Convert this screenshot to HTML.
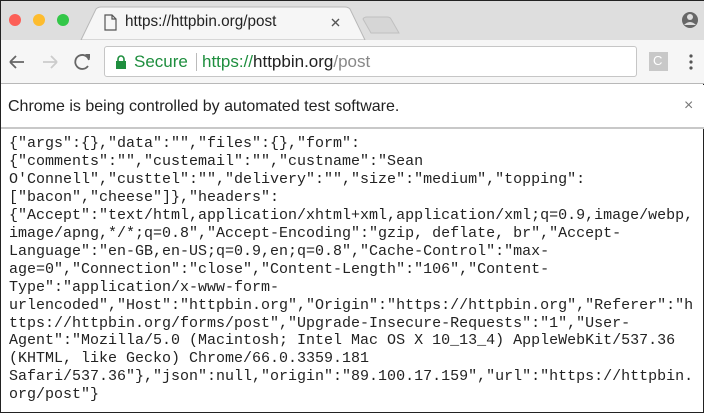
<!DOCTYPE html>
<html><head><style>
*{margin:0;padding:0;box-sizing:border-box}
html,body{width:704px;height:413px;overflow:hidden;background:#fff}
body{position:relative;font-family:"Liberation Sans",Arial,sans-serif;border:1px solid #222}
.tabbar{position:absolute;left:0;top:0;width:704px;height:39px;background:#dedede}
.dot{position:absolute;top:13px;width:12px;height:12px;border-radius:50%}
.toolbar{position:absolute;left:0;top:39px;width:704px;height:44px;background:#f6f6f6;border-bottom:1px solid #b8b8b8}
.omni{position:absolute;left:103px;top:6px;width:533px;height:31px;background:#fff;border:1px solid #c6c6c6;border-radius:3px}
.info{position:absolute;left:0;top:84px;width:704px;height:44px;background:#fff;border-bottom:2px solid #c8c8c8;font-size:16px;color:#222}
pre{position:absolute;left:8px;top:134px;font-family:"Liberation Mono","Courier New",monospace;font-size:15px;line-height:17.95px;color:#222}
</style></head><body>
<div class="tabbar">
<div class="dot" style="left:8px;background:#fc5f57"></div>
<div class="dot" style="left:32px;background:#fdbc2e"></div>
<div class="dot" style="left:56px;background:#33c748"></div>
<svg style="position:absolute;left:0;top:0" width="704" height="40">
<path d="M80 39 L95 8 Q97 6 100 6 L344 6 Q347 6 349 8 L364 39 Z" fill="#f6f6f6" stroke="#b8b8b8"/>
<path d="M362 18 Q363 16 366 16 L386 16 Q389 16 390 18 L398 32 L370 32 Z" fill="#d6d6d6" stroke="#c0c0c0"/>
<path d="M104 14 h7 l4 4 v11 h-11z M111 14 v4 h4" fill="none" stroke="#555" stroke-width="1.2"/>
<path d="M331 18 l7 7 M338 18 l-7 7" stroke="#555" stroke-width="1.4"/>
<circle cx="689" cy="19" r="8" fill="#666"/>
<circle cx="689" cy="16" r="3" fill="#dedede"/>
<path d="M683 24 Q689 18 695 24" fill="#dedede"/>
</svg>
<div style="position:absolute;left:124px;top:12px;font-size:15.3px;color:#222">https://httpbin.org/post</div>
</div>
<div class="toolbar">
<svg style="position:absolute;left:0;top:0" width="704" height="44">
<path d="M9 22 h14 M9 22 l6 -6 M9 22 l6 6" stroke="#666" stroke-width="1.8" fill="none"/>
<path d="M56 22 h-14 M56 22 l-6 -6 M56 22 l-6 6" stroke="#ccc" stroke-width="1.8" fill="none"/>
<path d="M88 20 A7 7 0 1 0 87 26" stroke="#666" stroke-width="1.8" fill="none"/>
<path d="M84 14 L89 14 L89 19 Z" fill="#666"/>
<path d="M614 15 l2.2 4.6 5 .6 -3.7 3.4 1 5 -4.5-2.5 -4.5 2.5 1-5 -3.7-3.4 5-.6z" fill="none" stroke="#555" stroke-width="1.3"/>
<rect x="648" y="12" width="19" height="19" fill="#c8c8c8"/>
<circle cx="690" cy="16" r="1.6" fill="#555"/><circle cx="690" cy="22" r="1.6" fill="#555"/><circle cx="690" cy="28" r="1.6" fill="#555"/>
</svg>
<div style="position:absolute;left:652px;top:13px;font-size:13px;color:#fff">C</div>
<div class="omni">
<svg style="position:absolute;left:10px;top:8px" width="12" height="14"><path d="M3 6 V4 a3 3 0 0 1 6 0 V6" stroke="#1e8e3e" stroke-width="1.6" fill="none"/><rect x="1" y="6" width="10" height="8" fill="#1e8e3e"/></svg>
<div style="position:absolute;left:29px;top:5px;font-size:17px;color:#1e8e3e">Secure</div>
<div style="position:absolute;left:91px;top:6px;width:1px;height:18px;background:#bbb"></div>
<div style="position:absolute;left:97px;top:5px;font-size:17px;color:#1e8e3e">https://<span style="color:#222">httpbin.org</span><span style="color:#888">/post</span></div>
</div>
</div>
<div class="info">
<div style="position:absolute;left:7px;top:13px">Chrome is being controlled by automated test software.</div>
<div style="position:absolute;left:683px;top:12px;color:#777;font-size:16px">×</div>
</div>
<pre>{"args":{},"data":"","files":{},"form":
{"comments":"","custemail":"","custname":"Sean
O'Connell","custtel":"","delivery":"","size":"medium","topping":
["bacon","cheese"]},"headers":
{"Accept":"text/html,application/xhtml+xml,application/xml;q=0.9,image/webp,
image/apng,*/*;q=0.8","Accept-Encoding":"gzip, deflate, br","Accept-
Language":"en-GB,en-US;q=0.9,en;q=0.8","Cache-Control":"max-
age=0","Connection":"close","Content-Length":"106","Content-
Type":"application/x-www-form-
urlencoded","Host":"httpbin.org","Origin":"https://httpbin.org","Referer":"h
ttps://httpbin.org/forms/post","Upgrade-Insecure-Requests":"1","User-
Agent":"Mozilla/5.0 (Macintosh; Intel Mac OS X 10_13_4) AppleWebKit/537.36
(KHTML, like Gecko) Chrome/66.0.3359.181
Safari/537.36"},"json":null,"origin":"89.100.17.159","url":"https://httpbin.
org/post"}</pre>
</body></html>
